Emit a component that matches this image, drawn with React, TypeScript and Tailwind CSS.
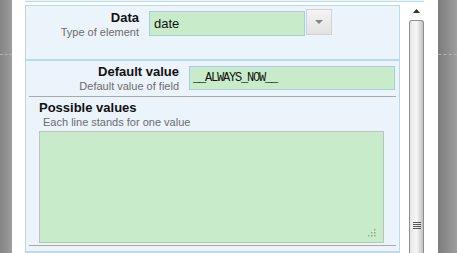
import React from 'react';

const sans = "font-['Liberation_Sans',Arial,sans-serif]";

const GripDots = () => (
  <svg width="10" height="10" viewBox="0 0 10 10" className="absolute right-[6px] bottom-[4px]">
    {[
      [7, 1],
      [4, 4],
      [7, 4],
      [1, 7],
      [4, 7],
      [7, 7],
    ].map(([x, y], i) => (
      <rect key={i} x={x} y={y} width="1.5" height="1.5" fill="#8fa892" />
    ))}
  </svg>
);

const Scrollbar = () => (
  <div className="w-[15px] flex flex-col bg-white">
    {/* up arrow */}
    <div className="h-[18px] flex items-center justify-center">
      <svg width="7" height="4" viewBox="0 0 7 4">
        <path d="M0 4 L3.5 0 L7 4 Z" fill="#333" />
      </svg>
    </div>
    {/* thumb */}
    <div className="flex-1 rounded-t-[3px] border border-b-0 border-[#8e8e8e] bg-gradient-to-r from-[#e6e6e6] via-[#f7f7f7] to-[#c2c2c2] flex flex-col items-center">
      <div className="mt-[201px] flex flex-col gap-[1px]">
        <div className="w-[8px] h-px bg-[#555]" />
        <div className="w-[8px] h-px bg-[#555]" />
        <div className="w-[8px] h-px bg-[#555]" />
        <div className="w-[8px] h-px bg-[#555]" />
      </div>
    </div>
  </div>
);

const App = () => {
  return (
    <div className={`${sans} w-[457px] h-[253px] overflow-hidden flex bg-white`}>
      {/* backdrop left */}
      <div className="w-[12px] h-full bg-gradient-to-r from-[#848484] to-[#9c9c9c]">
        <div className="mt-[54px] border-t border-dashed border-[#b4b4b4]" />
      </div>
      <div className="w-[13px] h-full bg-white" />

      {/* dialog body */}
      <div className="w-[399px] flex flex-col">
        <div className="h-[2px] bg-[#ebf3fb] border-b border-[#bcdcea]" />
        <div className="flex flex-1">
          <div className="w-[375px] mt-[3px] flex flex-col">
            {/* Data */}
            <div className="h-[55px] border border-[#b9daea] bg-[#ebf3fb] flex items-start">
              <div className="w-[113px] pt-[4px] text-right">
                <div className="text-[13px] leading-[15px] font-bold text-[#111]">Data</div>
                <div className="mt-[1px] text-[11px] leading-[13px] text-[#6c6c6c]">Type of element</div>
              </div>
              <div className="ml-[10px] mt-[5px] w-[156px] h-[25px] border border-[#a8cde2] bg-[#c8ecca] flex items-center pl-[4px] text-[13px] leading-[15px] text-[#111]">
                date
              </div>
              <div className="ml-[1px] mt-[3px] w-[26px] h-[26px] border border-[#d2d2d2] bg-gradient-to-b from-[#f4f4f4] to-[#e2e2e2] flex items-center justify-center">
                <svg width="8" height="4" viewBox="0 0 8 4">
                  <path d="M0 0 L8 0 L4 4 Z" fill="#858585" />
                </svg>
              </div>
            </div>

            {/* Default value + possible values */}
            <div className="flex-1 border-x border-t border-b-2 border-[#b9daea] bg-[#ebf3fb] flex flex-col">
              <div className="h-[35px] flex items-start pt-[3px]">
                <div className="w-[153px] text-right">
                  <div className="text-[13px] leading-[15px] font-bold text-[#111]">Default value</div>
                  <div className="mt-[1px] text-[11px] leading-[13px] text-[#6c6c6c]">Default value of field</div>
                </div>
                <div className="ml-[10px] mt-[2px] w-[206px] h-[24px] border border-[#a8cde2] bg-[#c8ecca] flex items-center pl-[3px] font-['Liberation_Mono','Courier_New',monospace] text-[12px] tracking-[-1.2px] text-[#111]">
                  __ALWAYS_NOW__
                </div>
              </div>
              <div className="mx-[3px] h-px bg-[#a9a9a9]" />

              <div className="pl-[13px] mt-[3px]">
                <div className="text-[13px] leading-[15px] font-bold text-[#111]">Possible values</div>
                <div className="ml-[4px] mt-[1px] text-[11px] leading-[13px] text-[#6c6c6c]">
                  Each line stands for one value
                </div>
                <div className="relative mt-[2px] w-[345px] h-[112px] border border-[#c0c0c0] bg-[#c8ecca]">
                  <GripDots />
                </div>
              </div>
              <div className="mx-[3px] mt-[2px] h-px bg-[#a9a9a9]" />
            </div>
          </div>
          <div className="w-[9px] bg-white" />
          <Scrollbar />
        </div>
      </div>

      {/* backdrop right */}
      <div className="w-[14px] h-full bg-white" />
      <div className="w-[19px] h-full bg-gradient-to-r from-[#7c7c7c] to-[#9e9e9e]">
        <div className="mt-[54px] border-t border-dashed border-[#b4b4b4]" />
      </div>
    </div>
  );
};

export default App;
